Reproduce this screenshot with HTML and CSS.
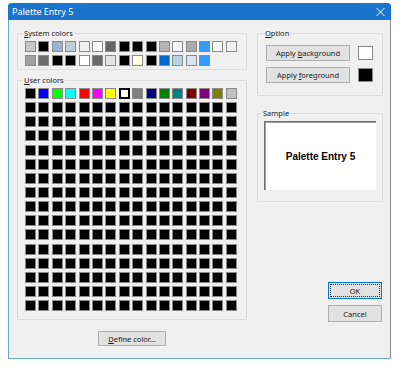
FILE: index.html
```html
<!DOCTYPE html>
<html lang="en">
<head>
    <meta charset="UTF-8">
    <meta name="viewport" content="width=device-width, initial-scale=1.0">
    <title>Palette Entry 5</title>
    <link rel="stylesheet" href="styles.css">
</head>
<body>
    <div class="dialog">
        <div class="titlebar">
            <span class="title">Palette Entry 5</span>
            <svg class="close" width="9" height="8" viewBox="0 0 9 8">
                <path d="M0.5 0 L8.5 8 M8.5 0 L0.5 8" stroke="#fff" stroke-width="1" fill="none"/>
            </svg>
        </div>

        <div class="content">
            <div class="left-col">
                <fieldset class="group sys-group">
                    <legend><u>S</u>ystem colors</legend>
                    <div class="swatches" id="system-colors"></div>
                </fieldset>

                <fieldset class="group user-group">
                    <legend><u>U</u>ser colors</legend>
                    <div class="swatches user-swatches" id="user-colors"></div>
                </fieldset>

                <button class="btn define-btn"><u>D</u>efine color...</button>
            </div>

            <div class="right-col">
                <fieldset class="group option-group">
                    <legend><u>O</u>ption</legend>
                    <div class="apply-row">
                        <button class="btn apply-btn">Apply <u>b</u>ackground</button>
                        <div class="apply-swatch bg-white"></div>
                    </div>
                    <div class="apply-row">
                        <button class="btn apply-btn">Apply <u>f</u>oreground</button>
                        <div class="apply-swatch bg-black"></div>
                    </div>
                </fieldset>

                <fieldset class="group sample-group">
                    <legend>Sample</legend>
                    <div class="sample-box">Palette Entry 5</div>
                </fieldset>

                <button class="btn dlg-btn ok-btn">OK</button>
                <button class="btn dlg-btn">Cancel</button>
            </div>
        </div>
    </div>

    <script>
        // system colors (GetSysColor 0..29)
        var systemColors = [
            "#c8c8c8", "#000000", "#99b4d1", "#bfcddb", "#f0f0f0", "#ffffff", "#646464", "#000000",
            "#000000", "#000000", "#b4b4b4", "#f4f7fc", "#ababab", "#3399ff", "#ffffff", "#f0f0f0",
            "#a0a0a0", "#6d6d6d", "#000000", "#000000", "#ffffff", "#696969", "#e3e3e3", "#000000",
            "#ffffe1", "#000000", "#0066cc", "#b9d1ea", "#d7e4f2", "#3399ff"
        ];

        // first row of the user palette, the rest is black
        var userColors = [
            "#000000", "#0000ff", "#00ff00", "#00ffff", "#ff0000", "#ff00ff", "#ffff00", "#ffffff",
            "#808080", "#000080", "#008000", "#008080", "#800000", "#800080", "#808000", "#c0c0c0"
        ];
        var selected = 7;

        function fillSwatches(id, colors, count) {
            var html = "";
            for (var i = 0; i < count; i++) {
                var color = colors[i] || "#000000";
                var cls = "swatch";
                if (id === "user-colors" && i === selected) {
                    cls += " selected";
                }
                html += '<div class="' + cls + '" style="background:' + color + '"></div>';
            }
            document.getElementById(id).innerHTML = html;
        }

        fillSwatches("system-colors", systemColors, systemColors.length);
        fillSwatches("user-colors", userColors, 256);
    </script>
</body>
</html>
```

FILE: styles.css
```css
body {
    margin: 0;
    padding: 0;
    background: #fff;
    font-family: "Noto Sans", sans-serif;
    font-size: 7.5px;
    color: #1a1a1a;
}

.dialog {
    box-sizing: border-box;
    width: 383px;
    height: 356px;
    margin: 3px 0 0 8px;
    background: #f0f0f0;
    border-left: 1px solid #6aa8de;
    border-bottom: 1px solid #6aa8de;
    border-right: 1px solid #8c8c8c;
    border-radius: 4px 4px 0 0;
    display: flex;
    flex-direction: column;
}

.titlebar {
    height: 17px;
    margin: 0 -1px;
    background: #1a74cf;
    color: #fff;
    border-radius: 4px 4px 0 0;
    display: flex;
    align-items: center;
    justify-content: space-between;
    padding: 0 6px 0 4px;
}

.title {
    font-size: 9px;
}

.close {
    display: block;
}

.content {
    display: flex;
    gap: 10px;
    padding: 8px 0 0 8px;
}

.left-col {
    width: 230px;
    display: flex;
    flex-direction: column;
}

.right-col {
    width: 126px;
    display: flex;
    flex-direction: column;
}

/* Group boxes */
.group {
    margin: 0;
    min-width: 0;
    border: 1px solid #dcdcdc;
    padding: 2px 7px 3px 7px;
}

.group legend {
    padding: 0 1px;
    margin-left: -2px;
    line-height: 11px;
    font-size: 7.5px;
}

.user-group {
    margin-top: 5px;
    padding-bottom: 8px;
}

.swatches {
    display: grid;
    grid-template-columns: repeat(16, 11px);
    column-gap: 2.4px;
    row-gap: 3px;
}

.user-swatches {
    row-gap: 3.15px;
}

.swatch {
    box-sizing: border-box;
    width: 11px;
    height: 11px;
    border: 1px solid #8a8a8a;
}

.swatch.selected {
    border: 2px solid #000;
}

/* Buttons */
.btn {
    box-sizing: border-box;
    margin: 0;
    padding: 0;
    background: #e1e1e1;
    border: 1px solid #adadad;
    font-family: "Noto Sans", sans-serif;
    font-size: 7.5px;
    color: #1a1a1a;
}

.define-btn {
    align-self: center;
    width: 68px;
    height: 15px;
    margin-top: 11px;
}

.option-group {
    padding: 6px 7px 12px 8px;
}

.apply-row {
    display: flex;
    align-items: center;
    gap: 8px;
}

.apply-row + .apply-row {
    margin-top: 6px;
}

.apply-btn {
    width: 84px;
    height: 16px;
}

.apply-swatch {
    box-sizing: border-box;
    width: 15px;
    height: 14px;
    border: 1px solid #8a8a8a;
}

.bg-white {
    background: #fff;
}

.bg-black {
    background: #000;
}

.sample-group {
    margin-top: 12px;
    padding: 2px 6px 11px 6px;
}

.sample-box {
    height: 68px;
    background: #fff;
    border-top: 1px solid #6e6e6e;
    border-left: 1px solid #6e6e6e;
    box-shadow: inset 1px 1px 0 #a0a0a0;
    display: flex;
    align-items: center;
    justify-content: center;
    font-family: "Liberation Sans", Arial, sans-serif;
    font-weight: bold;
    font-size: 10px;
    color: #000;
}

.dlg-btn {
    align-self: flex-end;
    width: 54px;
    height: 17px;
    margin-right: 1px;
}

.ok-btn {
    margin-top: 80px;
    border-color: #0078d7;
    outline: 1px dotted #333;
    outline-offset: -3px;
}

.ok-btn + .dlg-btn {
    margin-top: 6px;
}
```
